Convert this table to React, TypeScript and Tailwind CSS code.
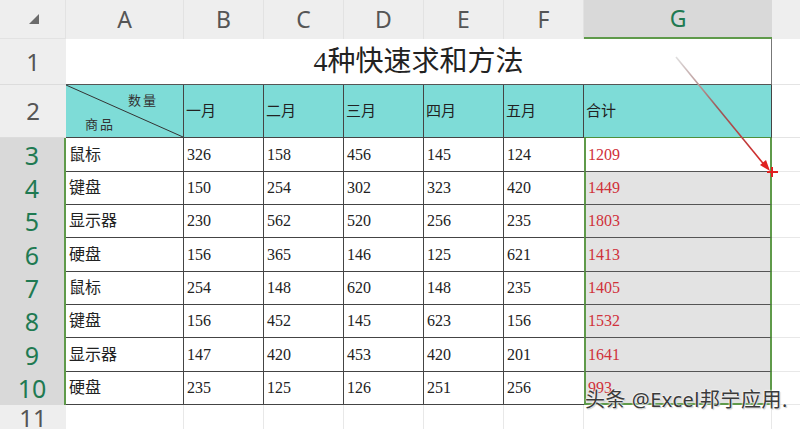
import React from "react";

const colLetters = ["A", "B", "C", "D", "E", "F", "G"];
const months = ["一月", "二月", "三月", "四月", "五月", "合计"];

const rows: [string, number, number, number, number, number, number][] = [
  ["鼠标", 326, 158, 456, 145, 124, 1209],
  ["键盘", 150, 254, 302, 323, 420, 1449],
  ["显示器", 230, 562, 520, 256, 235, 1803],
  ["硬盘", 156, 365, 146, 125, 621, 1413],
  ["鼠标", 254, 148, 620, 148, 235, 1405],
  ["键盘", 156, 452, 145, 623, 156, 1532],
  ["显示器", 147, 420, 453, 420, 201, 1641],
  ["硬盘", 235, 125, 126, 251, 256, 993],
];

const serif = "font-['Liberation_Serif','Noto_Sans_CJK_SC',serif]";
const sans = "font-['Noto_Sans','Noto_Sans_CJK_SC',sans-serif]";

export default function App() {
  return (
    <div className="relative w-[800px] h-[429px] overflow-hidden bg-white">
      <div className="grid grid-cols-[66px_118px_80px_80px_80px_80px_80px_188px_28px] grid-rows-[39px_46px_53px_34px_33px_33px_34px_33px_33px_34px_33px_24px]">
        {/* column headers */}
        <div className="flex items-center justify-center bg-[#eeeeee] border-r border-b border-[#e2e2e2]">
          <svg width="12" height="12" viewBox="0 0 12 12" className="ml-[2px]">
            <polygon points="11,1 11,11 1,11" fill="#6b6b6b" />
          </svg>
        </div>
        {colLetters.map((c) =>
          c === "G" ? (
            <div
              key={c}
              className={`flex items-center justify-center bg-[#d9d9d9] border-b-2 border-[#5f9a4a] text-[23px] leading-none text-[#1f7a52] ${sans}`}
            >
              {c}
            </div>
          ) : (
            <div
              key={c}
              className={`flex items-center justify-center bg-[#eeeeee] border-r border-[#e2e2e2] text-[23px] leading-none text-[#555] ${sans}`}
            >
              {c}
            </div>
          )
        )}
        <div className="bg-[#eeeeee]" />

        {/* row 1 */}
        <div className={`flex items-center justify-center bg-[#eeeeee] border-b border-[#dcdcdc] text-[24px] leading-none text-[#555] ${sans}`}>
          1
        </div>
        <div className={`col-span-7 flex items-center justify-center border-b border-r border-b-[#555] border-r-[#777] text-[28px] text-[#222] ${serif}`}>
          4种快速求和方法
        </div>
        <div className="border-b border-[#e4e4e4]" />

        {/* row 2 */}
        <div className={`flex items-center justify-center bg-[#eeeeee] border-b border-[#dcdcdc] text-[24px] leading-none text-[#555] ${sans}`}>
          2
        </div>
        <div className={`relative bg-[#7edcd7] border-r border-b border-[#444] text-[13px] text-[#333] ${serif}`}>
          <svg className="absolute inset-0" width="118" height="53" viewBox="0 0 118 53">
            <line x1="0" y1="0" x2="117" y2="52" stroke="#333" strokeWidth="1" />
          </svg>
          <span className="absolute left-[62px] top-[6px] tracking-[2px]">数量</span>
          <span className="absolute left-[19px] top-[30px] tracking-[2px]">商品</span>
        </div>
        {months.map((m, i) => (
          <div
            key={m}
            className={`flex items-center pl-[2px] bg-[#7edcd7] border-b text-[15px] text-[#222] ${serif} ${
              i === 5 ? "border-r border-r-[#444] border-b-[#4e8f3c]" : "border-r border-[#444]"
            }`}
          >
            {m}
          </div>
        ))}
        <div className="border-b border-[#e4e4e4]" />

        {/* data rows */}
        {rows.map((r, ri) => (
          <React.Fragment key={ri}>
            <div
              className={`flex items-center justify-center bg-[#d9d9d9] border-r-2 border-[#5f9a4a] text-[25px] leading-none text-[#1f7a52] ${sans}`}
            >
              {ri + 3}
            </div>
            <div className={`flex items-center pl-[3px] border-r border-b border-[#444] text-[16px] text-[#222] ${serif}`}>
              {r[0]}
            </div>
            {r.slice(1, 6).map((v, ci) => (
              <div
                key={ci}
                className={`flex items-center pl-[3px] border-b border-[#444] text-[16px] text-[#222] ${serif} ${
                  ci === 4 ? "" : "border-r"
                }`}
              >
                {v}
              </div>
            ))}
            <div
              className={`flex items-center pl-[2px] border-l-2 border-r-2 border-b border-l-[#5f9a4a] border-r-[#5f9a4a] text-[16px] text-[#d0313a] ${serif} ${
                ri === 0 ? "bg-white" : "bg-[#e3e3e3]"
              } ${ri === 7 ? "border-b-2 border-b-[#5f9a4a]" : "border-b-[#555]"}`}
            >
              {r[6]}
            </div>
            <div className="border-b border-[#e8e8e8]" />
          </React.Fragment>
        ))}

        {/* row 11 */}
        <div className={`flex items-start justify-center pt-[1px] bg-[#eeeeee] text-[24px] leading-none text-[#555] ${sans}`}>
          11
        </div>
        {colLetters.map((c) => (
          <div key={c} className="border-r border-[#e8e8e8]" />
        ))}
        <div />
      </div>

      {/* arrow annotation */}
      <svg className="absolute left-0 top-0 pointer-events-none" width="800" height="429" viewBox="0 0 800 429">
        <defs>
          <linearGradient id="arr" x1="675" y1="57" x2="770" y2="170" gradientUnits="userSpaceOnUse">
            <stop offset="0" stopColor="#e0e0e0" />
            <stop offset="0.45" stopColor="#9a5a5a" />
            <stop offset="1" stopColor="#e02020" />
          </linearGradient>
        </defs>
        <line x1="676" y1="57" x2="766" y2="167" stroke="url(#arr)" strokeWidth="1.6" />
        <polygon points="770,171 760,165 766,160" fill="#e02020" />
        <line x1="767" y1="172" x2="778" y2="172" stroke="#e02020" strokeWidth="2" />
        <line x1="772" y1="167" x2="772" y2="177" stroke="#e02020" strokeWidth="2" />
      </svg>

      {/* watermark */}
      <div
        className={`absolute left-[585px] top-[385px] text-[20px] tracking-[0.5px] text-[#3a3a3a] ${sans} [text-shadow:0_0_2px_#fff,0_0_2px_#fff,1px_1px_1px_#bbb]`}
      >
        头条 @Excel邦宁应用.
      </div>
    </div>
  );
}
